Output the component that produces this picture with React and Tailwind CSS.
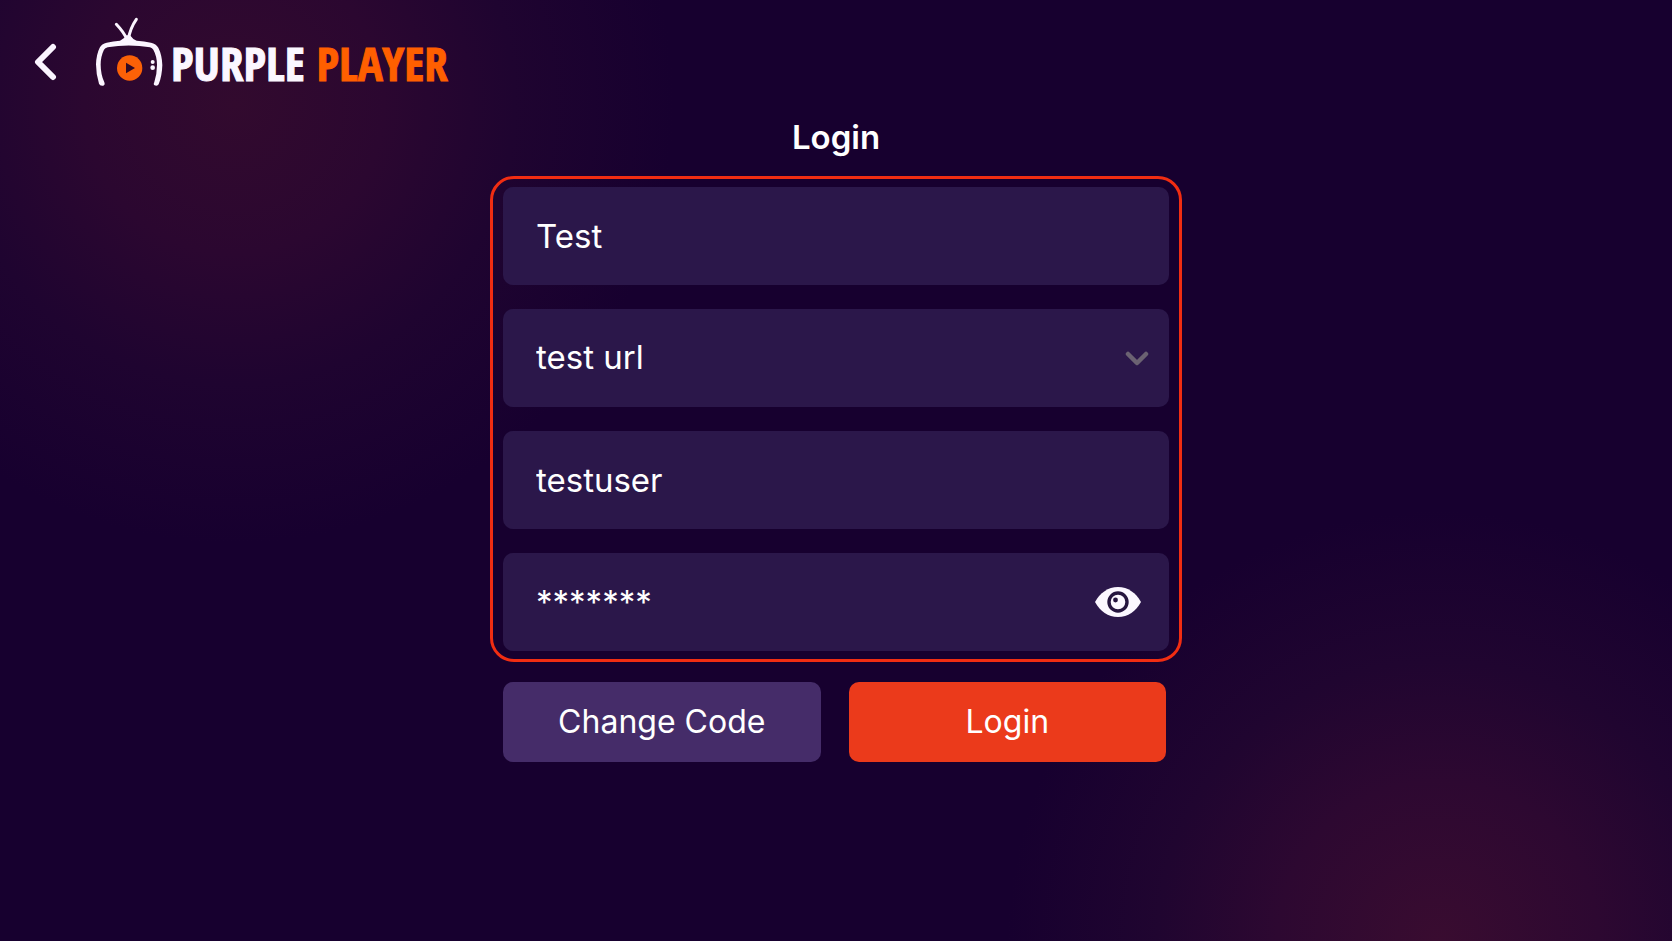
import { useState } from 'react';

const fieldClass =
  "w-full h-[98px] rounded-[10px] bg-[#2b174a] px-[33px] text-[33px] text-white outline-none";

// Television with the play button
const TvLogo = () => (
  <svg className="w-[68px] h-[70px] shrink-0" viewBox="225 50 204 210" fill="none" aria-hidden="true">
    <path
      d="M321 118 Q312 96 289 72 M325 118 Q330 84 349 57"
      stroke="#fbf5ff"
      strokeWidth="9"
      strokeLinecap="round"
    />
    <path
      d="M250 256 Q240 258 237 250 Q228 222 228 192 Q229 162 239 142 Q245 130 260 127 Q280 123 300 121 Q312 116 320 105 L330 105 Q338 117 350 121 Q373 123 393 127 Q408 130 415 142 Q426 164 427 194 Q426 228 416 252 Q412 259 402 254 Q400 251 403 245 Q411 220 411 194 Q411 168 400 148 Q397 143 390 141 Q326 130 263 141 Q255 143 252 148 Q242 168 242 193 Q242 222 253 246 Q256 254 250 256 Z"
      fill="#fbf5ff"
    />
    <circle cx="329" cy="203" r="38" fill="#fb6107" />
    <path d="M318 187 L345 203 L318 219 Z" fill="#300a26" />
    <circle cx="398" cy="185" r="6" fill="#fbf5ff" />
    <circle cx="398" cy="202" r="7" fill="#fbf5ff" />
  </svg>
);

const EyeIcon = () => (
  <svg className="w-[46px] h-8" viewBox="0 0 46 32" fill="none" aria-hidden="true">
    <path d="M0 16 C5 7 13 1 23 1 C33 1 41 7 46 16 C41 25 33 31 23 31 C13 31 5 25 0 16 Z" fill="#fbf7ff" />
    <circle cx="23" cy="16" r="9" fill="#fbf7ff" stroke="#25143f" strokeWidth="3.4" />
    <circle cx="20.5" cy="14" r="2.4" fill="#25143f" />
  </svg>
);

export default function App() {
  const [name, setName] = useState('Test');
  const [url, setUrl] = useState('test url');
  const [user, setUser] = useState('testuser');
  const [password, setPassword] = useState('testing');
  const [showPassword, setShowPassword] = useState(false);

  const handlePassword = (e) => {
    const value = e.target.value;
    if (showPassword) {
      setPassword(value);
    } else {
      // while masked only the typed characters are new
      setPassword(password.slice(0, value.length) + value.slice(password.length));
    }
  };

  return (
    <div className="min-h-screen bg-[#17002f] bg-[radial-gradient(circle_at_14%_11%,#320a2e_0,#2b0730_150px,#1f0430_280px,transparent_440px),radial-gradient(circle_at_86%_100%,#390c30_0,#2d0831_160px,#200530_280px,transparent_430px)] font-['Inter',sans-serif] text-white">
      <header className="flex items-end px-8 pt-[17px]">
        <button type="button" aria-label="Back" className="mb-1.5 w-[26px] h-10 cursor-pointer">
          <svg className="w-[26px] h-10" viewBox="0 0 26 40" fill="none" aria-hidden="true">
            <path d="M21 6 L6 21 L21 36" stroke="#fbf5ff" strokeWidth="6" strokeLinecap="round" strokeLinejoin="round" />
          </svg>
        </button>
        <a href="#" className="ml-[37px] flex items-end gap-2">
          <TvLogo />
          <span className="whitespace-nowrap font-['Open_Sans_Condensed','Roboto_Condensed',sans-serif] text-[47px] leading-12 font-bold text-[#fbf7ff] [-webkit-text-stroke:1px]">
            PURPLE <span className="text-[#ff5f00]">PLAYER</span>
          </span>
        </a>
      </header>

      <main className="mx-auto mt-[30px] w-full max-w-[692px]">
        <h1 className="text-center text-[33px] leading-10 font-semibold">Login</h1>

        <form className="mt-[19px]" onSubmit={(e) => e.preventDefault()}>
          <div className="flex flex-col gap-6 rounded-3xl border-3 border-[#f12d12] px-2.5 py-2">
            <input
              type="text"
              aria-label="Name"
              value={name}
              onChange={(e) => setName(e.target.value)}
              className={fieldClass}
            />

            <div className="relative">
              <select
                aria-label="Server URL"
                value={url}
                onChange={(e) => setUrl(e.target.value)}
                className={`${fieldClass} block appearance-none`}
              >
                <option value="test url">test url</option>
              </select>
              <svg
                className="pointer-events-none absolute top-1/2 right-5 w-6 h-4 -translate-y-1/2"
                viewBox="0 0 24 16"
                fill="none"
                aria-hidden="true"
              >
                <path d="M3 4 L12 13 L21 4" stroke="#6b6272" strokeWidth="4.5" strokeLinecap="round" strokeLinejoin="round" />
              </svg>
            </div>

            <input
              type="text"
              aria-label="Username"
              value={user}
              onChange={(e) => setUser(e.target.value)}
              className={fieldClass}
            />

            <div className="relative">
              <input
                type="text"
                aria-label="Password"
                autoComplete="off"
                value={showPassword ? password : '*'.repeat(password.length)}
                onChange={handlePassword}
                className={`${fieldClass} block`}
              />
              <button
                type="button"
                aria-label="Show password"
                onClick={() => setShowPassword(!showPassword)}
                className="absolute top-1/2 right-7 -translate-y-1/2 cursor-pointer"
              >
                <EyeIcon />
              </button>
            </div>
          </div>

          <div className="mt-5 grid grid-cols-2 gap-7 pr-4 pl-[13px]">
            <button type="button" className="h-20 rounded-[10px] bg-[#452c69] text-[32px] cursor-pointer">
              Change Code
            </button>
            <button type="submit" className="h-20 rounded-[10px] bg-[#eb3a1b] text-[32px] cursor-pointer">
              Login
            </button>
          </div>
        </form>
      </main>
    </div>
  );
}
